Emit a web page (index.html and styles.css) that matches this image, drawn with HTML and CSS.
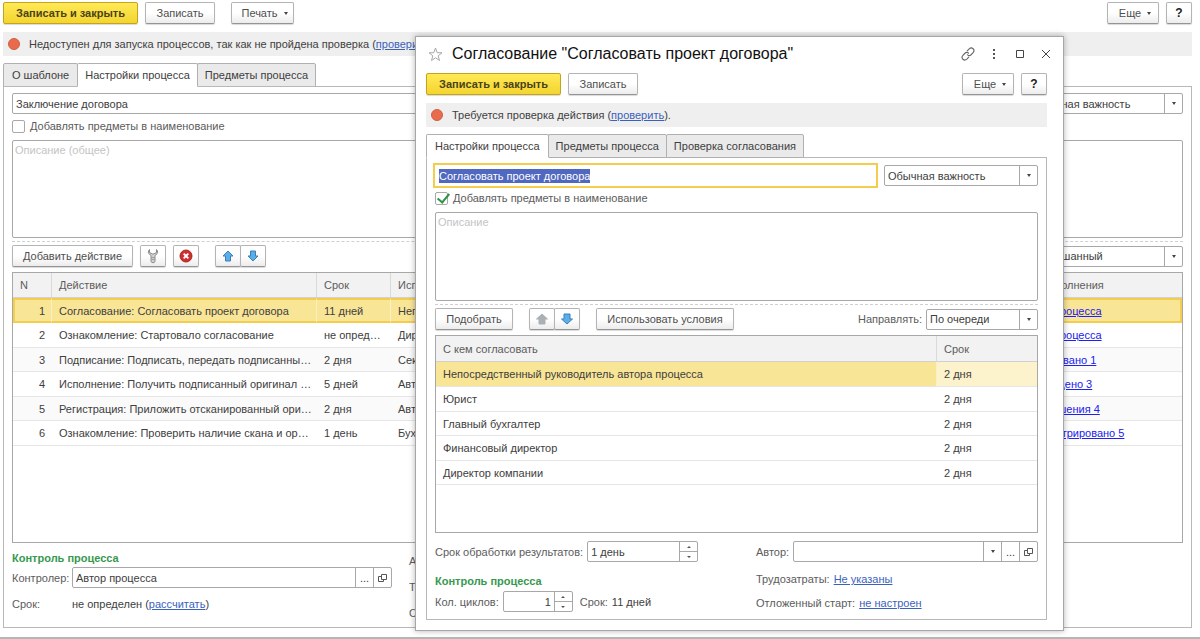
FILE: index.html
```
<!DOCTYPE html>
<html lang="ru">
<head>
    <meta charset="UTF-8">
    <meta name="viewport" content="width=device-width, initial-scale=1.0">
    <title>Согласование "Согласовать проект договора"</title>
    <link rel="stylesheet" href="styles.css">
</head>
<body>
    <main class="page">
        <div class="toolbar">
            <button type="button" class="btn btn-primary">Записать и закрыть</button>
            <button type="button" class="btn btn-save">Записать</button>
            <button type="button" class="btn btn-menu btn-print">Печать<span class="arrow"></span></button>
            <span class="spacer"></span>
            <button type="button" class="btn btn-menu btn-more">Еще<span class="arrow"></span></button>
            <button type="button" class="btn btn-icon btn-help">?</button>
        </div>

        <div class="notice">
            <span class="notice-dot"></span>
            <span>Недоступен для запуска процессов, так как не пройдена проверка (<a href="#">проверить</a>).</span>
        </div>

        <div class="tabs">
            <button type="button" class="tab">О шаблоне</button>
            <button type="button" class="tab active">Настройки процесса</button>
            <button type="button" class="tab">Предметы процесса</button>
        </div>

        <section class="pane">
            <div class="row">
                <div class="field grow">
                    <input type="text" value="Заключение договора" aria-label="Наименование">
                </div>
                <div class="field importance">
                    <select aria-label="Важность"><option>Обычная важность</option></select>
                    <span class="addon"><span class="arrow"></span></span>
                </div>
            </div>
            <label class="check"><input type="checkbox"> Добавлять предметы в наименование</label>
            <textarea class="description" placeholder="Описание (общее)" aria-label="Описание"></textarea>
            <div class="dashed"></div>

            <div class="toolbar actions">
                <button type="button" class="btn btn-add">Добавить действие</button>
                <button type="button" class="btn btn-icon" aria-label="Настроить">
                    <svg width="14" height="16" viewBox="0 0 14 16"><path d="M3.500 1.500v3L7 6.200l3.500-1.700v-3c1.600 1.500 1.600 4-.5 5.200L9 7.500v5.800c0 1.900-4 1.900-4 0V7.500l-1-.8c-2.100-1.200-2.100-3.700-.5-5.200z" fill="#d2d2d2" stroke="#8a8a8a"/><path d="M5.500 9.500h3M5.500 11.500h3" stroke="#858585" stroke-width=".7"/></svg>
                </button>
                <button type="button" class="btn btn-icon" aria-label="Удалить">
                    <svg width="14" height="14" viewBox="0 0 14 14"><circle cx="7" cy="7" r="6" fill="#cf2f2f" stroke="#a92525"/><path d="M4.700 4.700l4.600 4.600M9.300 4.700L4.700 9.300" stroke="#fff" stroke-width="1.900"/></svg>
                </button>
                <div class="btn-group">
                    <button type="button" class="btn btn-icon" aria-label="Вверх">
                        <svg width="12" height="12" viewBox="0 0 12 12"><path d="M6 1l5 5H8.500v5h-5V6H1z" fill="#5aaeea" stroke="#3a7fb8"/></svg>
                    </button>
                    <button type="button" class="btn btn-icon" aria-label="Вниз">
                        <svg width="12" height="12" viewBox="0 0 12 12"><path d="M6 11l5-5H8.500V1h-5v5H1z" fill="#5aaeea" stroke="#3a7fb8"/></svg>
                    </button>
                </div>
                <span class="spacer"></span>
                <div class="field order">
                    <select aria-label="Порядок"><option>Смешанный</option></select>
                    <span class="addon"><span class="arrow"></span></span>
                </div>
            </div>

            <div class="table-box grow">
                <table class="grid process">
                    <colgroup>
                        <col class="col-n"><col class="col-action"><col class="col-term"><col><col class="col-order">
                    </colgroup>
                    <thead>
                        <tr><th>N</th><th>Действие</th><th>Срок</th><th>Исполнитель</th><th>Ход исполнения</th></tr>
                    </thead>
                    <tbody>
                        <tr class="current"><td>1</td><td>Согласование: Согласовать проект договора</td><td>11 дней</td><td>Непосредственный руководитель</td><td><a href="#">Старт процесса</a></td></tr>
                        <tr><td>2</td><td>Ознакомление: Стартовало согласование</td><td>не определен</td><td>Директор компании</td><td><a href="#">Старт процесса</a></td></tr>
                        <tr><td>3</td><td>Подписание: Подписать, передать подписанный договор</td><td>2 дня</td><td>Секретарь</td><td><a href="#">Согласовано 1</a></td></tr>
                        <tr><td>4</td><td>Исполнение: Получить подписанный оригинал договора</td><td>5 дней</td><td>Автор процесса</td><td><a href="#">Утверждено 3</a></td></tr>
                        <tr><td>5</td><td>Регистрация: Приложить отсканированный оригинал</td><td>2 дня</td><td>Автор процесса</td><td><a href="#">Приглашения 4</a></td></tr>
                        <tr><td>6</td><td>Ознакомление: Проверить наличие скана и оригинала</td><td>1 день</td><td>Бухгалтер</td><td><a href="#">Зарегистрировано 5</a></td></tr>
                    </tbody>
                </table>
            </div>

            <div class="page-footer">
                <div class="control">
                    <h2>Контроль процесса</h2>
                    <div class="control-row">
                        <label for="controller">Контролер:</label>
                        <div class="field grow">
                            <input type="text" id="controller" value="Автор процесса">
                            <button type="button" class="addon">...</button>
                            <button type="button" class="addon" aria-label="Открыть">
                                <svg width="10" height="10" viewBox="0 0 10 10" fill="#fff" stroke="#555"><path d="M.5 3.500h5v5h-5z"/><path d="M3.500 1.500h5v5h-5z"/></svg>
                            </button>
                        </div>
                    </div>
                    <div class="control-row">
                        <span>Срок:</span>
                        <span class="value">не определен (<a href="#">рассчитать</a>)</span>
                    </div>
                </div>
                <div class="extra">
                    <span>Автор:</span>
                    <span>Трудозатраты:</span>
                    <span>Отложенный старт:</span>
                </div>
            </div>
        </section>
    </main>

    <div class="dialog" role="dialog" aria-labelledby="dialogTitle">
        <header class="dialog-header">
            <svg width="15" height="15" viewBox="0 0 15 15"><path d="M7.500 1l1.700 4.700 4.800.1-3.800 3 1.300 4.700-4-2.700-4 2.700 1.300-4.700-3.800-3 4.800-.1z" fill="none" stroke="#a8a8a8"/></svg>
            <h1 id="dialogTitle">Согласование "Согласовать проект договора"</h1>
            <div class="window-buttons">
                <button type="button" aria-label="Ссылка">
                    <svg width="14" height="14" viewBox="0 0 14 14" fill="none" stroke="#666" stroke-width="1.100"><path d="M6 4.200l2.200-2.300c2.700-2.500 6.300.9 3.900 3.700L9.800 8c-1.200 1.100-3 .8-3.600-.6"/><path d="M8 9.800l-2.200 2.300c-2.700 2.500-6.300-.9-3.900-3.700L4.200 6c1.200-1.100 3-.8 3.600.6"/></svg>
                </button>
                <button type="button" aria-label="Меню">
                    <svg width="14" height="14" viewBox="0 0 14 14" fill="#555"><path d="M6 2h2v2H6zM6 6h2v2H6zM6 10h2v2H6z"/></svg>
                </button>
                <button type="button" aria-label="Развернуть">
                    <svg width="14" height="14" viewBox="0 0 14 14" fill="none" stroke="#444"><path d="M3.500 3.500h7v7h-7z"/></svg>
                </button>
                <button type="button" aria-label="Закрыть">
                    <svg width="14" height="14" viewBox="0 0 14 14" stroke="#444"><path d="M3 3l8 8M11 3l-8 8"/></svg>
                </button>
            </div>
        </header>

        <div class="toolbar">
            <button type="button" class="btn btn-primary">Записать и закрыть</button>
            <button type="button" class="btn btn-save">Записать</button>
            <span class="spacer"></span>
            <button type="button" class="btn btn-menu btn-more">Еще<span class="arrow"></span></button>
            <button type="button" class="btn btn-icon btn-help">?</button>
        </div>

        <div class="notice">
            <span class="notice-dot"></span>
            <span>Требуется проверка действия (<a href="#">проверить</a>).</span>
        </div>

        <div class="tabs">
            <button type="button" class="tab active">Настройки процесса</button>
            <button type="button" class="tab">Предметы процесса</button>
            <button type="button" class="tab">Проверка согласования</button>
        </div>

        <section class="pane">
            <div class="row">
                <div class="field grow focused">
                    <input type="text" id="actionName" value="Согласовать проект договора" aria-label="Наименование">
                </div>
                <div class="field importance">
                    <select aria-label="Важность"><option>Обычная важность</option></select>
                    <span class="addon"><span class="arrow"></span></span>
                </div>
            </div>
            <label class="check"><input type="checkbox" checked> Добавлять предметы в наименование</label>
            <textarea class="description" placeholder="Описание" aria-label="Описание"></textarea>
            <div class="dashed"></div>

            <div class="toolbar actions">
                <button type="button" class="btn btn-pick">Подобрать</button>
                <div class="btn-group">
                    <button type="button" class="btn btn-icon" aria-label="Вверх" disabled>
                        <svg width="14" height="12" viewBox="0 0 14 12"><path d="M7 1l5.500 5H10v5H4V6H1.500z" fill="#a9b0b6" stroke="#a9b0b6"/></svg>
                    </button>
                    <button type="button" class="btn btn-icon" aria-label="Вниз">
                        <svg width="14" height="12" viewBox="0 0 14 12"><path d="M7 11l5.500-5H10V1H4v5H1.500z" fill="#5aaeea" stroke="#3a7fb8"/></svg>
                    </button>
                </div>
                <button type="button" class="btn btn-terms">Использовать условия</button>
                <span class="spacer"></span>
                <div class="footer-row">
                    <label for="direction">Направлять:</label>
                    <div class="field direction">
                        <select id="direction"><option>По очереди</option></select>
                        <span class="addon"><span class="arrow"></span></span>
                    </div>
                </div>
            </div>

            <div class="table-box">
                <table class="grid people">
                    <colgroup>
                        <col><col class="col-days">
                    </colgroup>
                    <thead>
                        <tr><th>С кем согласовать</th><th>Срок</th></tr>
                    </thead>
                    <tbody>
                        <tr class="current"><td>Непосредственный руководитель автора процесса</td><td>2 дня</td></tr>
                        <tr><td>Юрист</td><td>2 дня</td></tr>
                        <tr><td>Главный бухгалтер</td><td>2 дня</td></tr>
                        <tr><td>Финансовый директор</td><td>2 дня</td></tr>
                        <tr><td>Директор компании</td><td>2 дня</td></tr>
                    </tbody>
                </table>
            </div>

            <div class="dialog-footer">
                <div class="footer-left">
                    <div class="footer-row">
                        <label for="resultTerm">Срок обработки результатов:</label>
                        <div class="field result-term">
                            <input type="text" id="resultTerm" value="1 день">
                            <span class="stepper"><button type="button" aria-label="Больше"></button><button type="button" aria-label="Меньше"></button></span>
                        </div>
                    </div>
                    <h2>Контроль процесса</h2>
                    <div class="footer-row">
                        <label for="cycles">Кол. циклов:</label>
                        <div class="field cycles">
                            <input type="text" id="cycles" value="1">
                            <span class="stepper"><button type="button" aria-label="Больше"></button><button type="button" aria-label="Меньше"></button></span>
                        </div>
                        <span class="cycle-term">Срок:</span>
                        <span class="value">11 дней</span>
                    </div>
                </div>
                <div class="footer-right">
                    <div class="footer-row">
                        <label for="author">Автор:</label>
                        <div class="field grow">
                            <input type="text" id="author">
                            <button type="button" class="addon" aria-label="Выбрать"><span class="arrow"></span></button>
                            <button type="button" class="addon">...</button>
                            <button type="button" class="addon" aria-label="Открыть">
                                <svg width="10" height="10" viewBox="0 0 10 10" fill="#fff" stroke="#555"><path d="M.5 3.500h5v5h-5z"/><path d="M3.500 1.500h5v5h-5z"/></svg>
                            </button>
                        </div>
                    </div>
                    <div class="link-row">Трудозатраты: <a href="#">Не указаны</a></div>
                    <div class="link-row">Отложенный старт: <a href="#">не настроен</a></div>
                </div>
            </div>
        </section>
    </div>

    <script src="script.js"></script>
</body>
</html>
```
FILE: script.js
```
const actionName = document.getElementById('actionName');
actionName.focus();
actionName.select();
```
FILE: styles.css
```
:root {
    --border: #a8a8a8;
    --text: #404040;
    --label: #5c5c5c;
    --link: #3a62bd;
    --yellow: #f4cd4d;
}

* {
    box-sizing: border-box;
}

body {
    margin: 0;
    background: #fff;
    color: var(--text);
    font-family: "Liberation Sans", Arial, sans-serif;
    font-size: 11px;
    line-height: 14px;
}

button,
input,
select,
textarea {
    font: inherit;
    color: inherit;
}

h1,
h2 {
    margin: 0;
}

h2 {
    font-size: 11px;
    line-height: 16px;
    color: #36984e;
}

a {
    color: var(--link);
}

.page {
    display: flex;
    flex-direction: column;
    min-height: 100vh;
    padding: 2px 8px 9px 3px;
    border-bottom: 2px solid #b5b5b5;
}

.grow {
    flex: 1;
}

.spacer {
    flex: 1;
}

/* Buttons */
.toolbar {
    display: flex;
    align-items: center;
    gap: 7px;
}

.btn {
    display: flex;
    align-items: center;
    justify-content: center;
    height: 22px;
    padding: 0;
    border: 1px solid #b4b4b4;
    border-bottom-color: #949494;
    border-radius: 2px;
    background: linear-gradient(#fff 50%, #ececec);
    box-shadow: 0 1px 1px rgba(0, 0, 0, 0.15);
    color: #4f4f4f;
    white-space: nowrap;
}

.btn-primary {
    width: 135px;
    border-color: #c2a51d;
    background: linear-gradient(#ffe956, #f4d530);
    color: #4a4218;
    font-weight: bold;
}

.btn-save {
    width: 70px;
}

.btn-menu {
    gap: 6px;
}

.btn-print {
    width: 63px;
    margin-left: 9px;
    padding-left: 4px;
}

.btn-more {
    width: 52px;
    padding-left: 4px;
}

.btn-icon {
    width: 26px;
}

.btn-help {
    color: #222;
    font-size: 12px;
    font-weight: bold;
}

.btn-add {
    width: 121px;
}

.btn-pick {
    width: 78px;
}

.btn-terms {
    width: 138px;
    margin-left: 9px;
}

.btn-group {
    display: flex;
    margin-left: 9px;
}

.btn-group .btn + .btn {
    margin-left: -1px;
}

.arrow {
    border: 2px solid transparent;
    border-top: 3px solid #444;
    border-bottom: 0;
}

/* Status line */
.notice {
    display: flex;
    align-items: center;
    gap: 9px;
    height: 24px;
    margin-top: 8px;
    padding-left: 5px;
    background: #efefef;
    white-space: nowrap;
}

.notice-dot {
    width: 12px;
    height: 12px;
    border: 1px solid #cf6044;
    border-radius: 50%;
    background: #ea6a4c;
}

/* Tabs */
.tabs {
    display: flex;
    margin-top: 7px;
}

.tab {
    height: 24px;
    margin-bottom: -1px;
    padding: 0 8px;
    border: 1px solid #b0b0b0;
    border-radius: 2px 2px 0 0;
    background: #eaeaea;
    white-space: nowrap;
}

.tab + .tab {
    margin-left: -1px;
    padding: 0 7px;
}

.tab.active {
    position: relative;
    border-bottom-color: #fff;
    background: #fff;
}

.pane {
    display: flex;
    flex: 1;
    flex-direction: column;
    padding: 6px 8px;
    border: 1px solid #b8b8b8;
}

/* Fields */
.row {
    display: flex;
    gap: 8px;
}

.field {
    display: flex;
    height: 21px;
    border: 1px solid var(--border);
    border-radius: 2px;
    background: #fff;
}

.field input,
.field select {
    flex: 1;
    min-width: 0;
    padding: 0 3px;
    border: 0;
    outline: 0;
    background: none;
    appearance: none;
}

.field.focused {
    border-color: #fff;
    border-radius: 0;
    outline: 2px solid var(--yellow);
}

.field input::selection {
    background: #5068c0;
    color: #fff;
}

.addon {
    display: flex;
    align-items: center;
    justify-content: center;
    width: 18px;
    padding: 0;
    border: 0;
    border-left: 1px solid var(--border);
    background: none;
}

.importance {
    width: 154px;
}

.order {
    width: 147px;
}

.direction {
    width: 112px;
}

.check {
    display: flex;
    align-items: center;
    gap: 5px;
    height: 14px;
    margin-top: 5px;
    color: var(--label);
}

.check input {
    position: relative;
    width: 13px;
    height: 13px;
    margin: 0;
    border: 1px solid var(--border);
    border-radius: 2px;
    background: #fff;
    appearance: none;
}

.check input:checked::after {
    content: "";
    position: absolute;
    top: -2px;
    left: 4px;
    width: 5px;
    height: 10px;
    border: solid #2c9444;
    border-width: 0 2px 2px 0;
    transform: rotate(40deg);
}

.description {
    height: 98px;
    margin-top: 7px;
    padding: 2px;
    border: 1px solid var(--border);
    border-radius: 2px;
    resize: none;
}

.description::placeholder {
    color: #c4c4c4;
}

.dashed {
    margin-top: 3px;
    border-top: 1px dashed #d0d0d0;
}

.actions {
    margin-top: 3px;
}

/* Tables */
.table-box {
    margin-top: 5px;
    border: 1px solid var(--border);
    overflow: hidden;
}

.grid {
    width: 100%;
    border-collapse: separate;
    border-spacing: 0;
    table-layout: fixed;
}

.grid th,
.grid td {
    height: 24px;
    padding: 0 5px 0 7px;
    border-bottom: 1px solid #e6e6e6;
    overflow: hidden;
    text-align: left;
    text-overflow: ellipsis;
    white-space: nowrap;
}

.grid th {
    height: 26px;
    border-right: 1px solid #d9d9d9;
    border-bottom-color: #d0d0d0;
    background: #f2f2f2;
    color: var(--label);
    font-weight: normal;
}

.grid th:last-child {
    border-right: 0;
}

.grid tr:nth-child(even) td {
    height: 25px;
}

.grid .current td {
    height: 25px;
    border-right: 1px solid #fbf0c4;
    background: #f9e596;
}

.process th {
    height: 25px;
}

.process tr:nth-child(odd):not(.current) td {
    background: #fafafa;
}

.process td:first-child {
    padding-right: 7px;
    text-align: right;
}

.process td:nth-child(3) {
    padding-right: 8px;
}

.process .current td {
    border-top: 2px solid var(--yellow);
    border-bottom: 2px solid var(--yellow);
}

.process .current td:first-child {
    padding-right: 6px;
    border-left: 2px solid var(--yellow);
}

.process .current td:last-child {
    border-right: 2px solid var(--yellow);
}

.process a {
    color: #2020f0;
}

.people .current td:last-child {
    border-right: 0;
    background: #fcf2cb;
}

.col-n {
    width: 39px;
}

.col-action {
    width: 265px;
}

.col-term {
    width: 74px;
}

.col-order {
    width: 168px;
}

.col-days {
    width: 100px;
}

/* Bottom part of the template form */
.page-footer {
    display: flex;
    gap: 17px;
    color: var(--label);
}

.control {
    width: 380px;
    padding: 7px 0;
}

.page-footer h2 {
    margin-bottom: 1px;
}

.control-row {
    display: grid;
    grid-template-columns: 60px 1fr;
    align-items: center;
    min-height: 21px;
    margin-bottom: 5px;
}

.control-row:last-child {
    margin: 0;
}

.value,
.field {
    color: var(--text);
}

.extra {
    display: flex;
    flex-direction: column;
    gap: 12px;
    padding-top: 11px;
}

/* Action window */
.dialog {
    position: absolute;
    top: 36px;
    left: 415px;
    width: 649px;
    padding: 0 16px 10px 10px;
    border: 1px solid #a6a6a6;
    background: #fff;
    box-shadow: 0 0 6px rgba(0, 0, 0, 0.3);
}

.dialog-header {
    display: flex;
    align-items: center;
    gap: 9px;
    height: 36px;
    margin-right: -9px;
    padding: 0 0 2px 2px;
}

.dialog-header h1 {
    flex: 1;
    color: #111;
    font-size: 16px;
    font-weight: normal;
    line-height: 20px;
}

.window-buttons {
    display: flex;
    gap: 6px;
}

.window-buttons button {
    display: flex;
    align-items: center;
    justify-content: center;
    width: 20px;
    height: 20px;
    padding: 0;
    border: 0;
    background: none;
}

.dialog .pane {
    padding: 7px 8px;
}

.dialog .description {
    height: 89px;
}

.dialog .table-box {
    height: 198px;
}

.dialog-footer {
    display: flex;
    justify-content: space-between;
    padding-top: 8px;
    color: var(--label);
}

.footer-left h2 {
    margin: 11px 0 2px;
}

.footer-row {
    display: flex;
    align-items: center;
    gap: 4px;
    color: var(--label);
}

.footer-right {
    width: 282px;
}

.link-row {
    margin-top: 10px;
}

.link-row a {
    margin-left: 1px;
}

.result-term {
    width: 111px;
}

.cycles {
    width: 70px;
}

.cycles input {
    text-align: right;
}

.cycle-term {
    margin-left: 3px;
}

.stepper {
    display: flex;
    flex-direction: column;
    width: 18px;
    border-left: 1px solid var(--border);
}

.stepper button {
    display: flex;
    flex: 1;
    align-items: center;
    justify-content: center;
    min-height: 0;
    padding: 0;
    border: 0;
    background: none;
}

.stepper button + button {
    border-top: 1px solid var(--border);
}

.stepper button::before {
    content: "";
    border: 2px solid transparent;
    border-top: 0;
    border-bottom: 2px solid #555;
}

.stepper button + button::before {
    border-top: 2px solid #555;
    border-bottom: 0;
}
```
